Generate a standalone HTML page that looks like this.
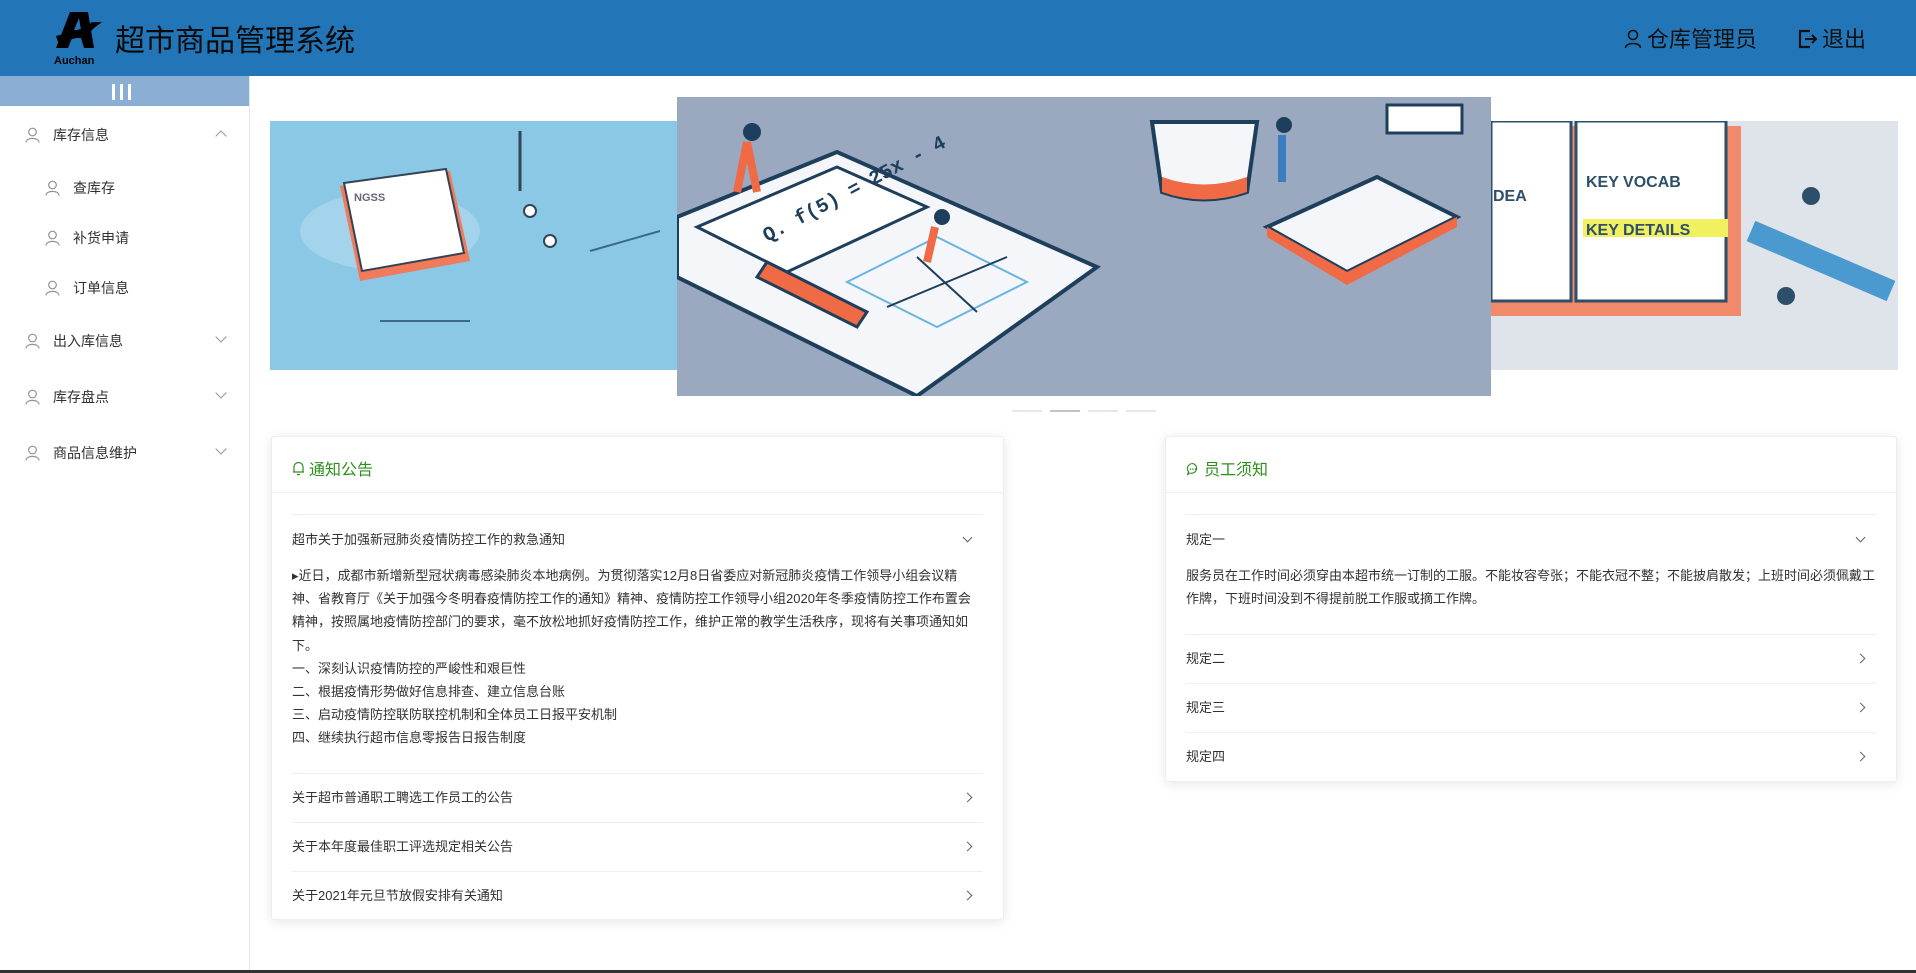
<!DOCTYPE html>
<html><head><meta charset="utf-8"><style>
*{margin:0;padding:0;box-sizing:border-box}
body{width:1916px;height:973px;overflow:hidden;background:#fff;font-family:"Liberation Sans","Noto Sans CJK SC",sans-serif;color:#303133;position:relative}
.hdr{position:absolute;left:0;top:0;width:1916px;height:76px;background:#2276b8}
.title{position:absolute;left:115px;top:16px;font-size:30px;color:#0a0a0a;white-space:nowrap}
.user{position:absolute;left:1624px;top:22px;font-size:22px;color:#111;white-space:nowrap}
.logout{position:absolute;left:1798px;top:22px;font-size:22px;color:#111;white-space:nowrap}
.side{position:absolute;left:0;top:76px;width:250px;height:894px;border-right:1px solid #e6e6e6;background:#fff}
.tog{height:30px;background:#8aaed4;position:relative}
.tog i{position:absolute;top:8px;width:3px;height:16px;background:#fff}
.mi{position:absolute;font-size:14px;color:#303133;white-space:nowrap}
.ic{position:absolute;width:15px;height:16px}
.arr{position:absolute;left:217px;width:8px;height:8px;border-right:1px solid #909399;border-bottom:1px solid #909399}
.card{position:absolute;background:#fff;border:1px solid #ebeef5;box-shadow:0 2px 12px rgba(0,0,0,.1);border-radius:3px}
.ch{height:56px;border-bottom:1px solid #ebeef5;font-size:16px;color:#2e8f1c;padding:19px 0 0 20px;white-space:nowrap}
.row{position:absolute;left:20px;right:20px;font-size:13px;color:#303133;border-top:1px solid #ebeef5;white-space:nowrap}
.para{position:absolute;left:20px;right:20px;font-size:13px;line-height:23.2px;color:#303133}
.chev{position:absolute;right:12px;width:7px;height:7px;border-right:1px solid #606266;border-bottom:1px solid #606266}
.bottom{position:absolute;left:0;top:970px;width:1916px;height:3px;background:#333}
</style></head><body>
<div class="hdr">
<svg style="position:absolute;left:54px;top:10px" width="52" height="56" viewBox="0 0 52 56"><path d="M2 38 L16 2 L34 2 L40 38 L30 38 L27 28 L18 28 L14 38 Z" fill="#000"/><path d="M20 20 L25 8 L27 20 Z" fill="#2276b8"/><path d="M2 26 L30 18 L38 12 L48 12 L40 18 L32 26 L4 32Z" fill="#000"/><text x="0" y="54" font-size="11" font-weight="bold" font-family="Liberation Sans" fill="#000">Auchan</text></svg>
<div class="title">超市商品管理系统</div>
<div class="user"><svg width="18" height="20" viewBox="0 0 18 20" style="vertical-align:-2px;margin-right:5px"><circle cx="9" cy="6" r="4.5" fill="none" stroke="#111" stroke-width="1.6"/><path d="M1.5 19 C1.5 13 16.5 13 16.5 19" fill="none" stroke="#111" stroke-width="1.6"/></svg>仓库管理员</div>
<div class="logout"><svg width="20" height="20" viewBox="0 0 20 20" style="vertical-align:-2px;margin-right:4px"><path d="M12 2 H2 V18 H12" fill="none" stroke="#111" stroke-width="2.2"/><path d="M7 10 H18 M14 6 L18 10 L14 14" fill="none" stroke="#111" stroke-width="2"/></svg>退出</div>
</div>
<div class="side">
<div class="tog"><i style="left:112px"></i><i style="left:120px"></i><i style="left:128px"></i></div>
</div>
<svg class="ic" style="left:25px;top:127px" viewBox="0 0 15 16"><circle cx="7.5" cy="5" r="3.8" fill="none" stroke="#909399" stroke-width="1.2"/><path d="M1 15.5 C1 10 14 10 14 15.5" fill="none" stroke="#909399" stroke-width="1.2"/></svg>
<div class="mi" style="left:53px;top:125px">库存信息</div><div class="arr" style="top:132px;transform:rotate(-135deg)"></div>
<svg class="ic" style="left:45px;top:180px" viewBox="0 0 15 16"><circle cx="7.5" cy="5" r="3.8" fill="none" stroke="#909399" stroke-width="1.2"/><path d="M1 15.5 C1 10 14 10 14 15.5" fill="none" stroke="#909399" stroke-width="1.2"/></svg>
<div class="mi" style="left:73px;top:178px">查库存</div>
<svg class="ic" style="left:45px;top:230px" viewBox="0 0 15 16"><circle cx="7.5" cy="5" r="3.8" fill="none" stroke="#909399" stroke-width="1.2"/><path d="M1 15.5 C1 10 14 10 14 15.5" fill="none" stroke="#909399" stroke-width="1.2"/></svg>
<div class="mi" style="left:73px;top:228px">补货申请</div>
<svg class="ic" style="left:45px;top:280px" viewBox="0 0 15 16"><circle cx="7.5" cy="5" r="3.8" fill="none" stroke="#909399" stroke-width="1.2"/><path d="M1 15.5 C1 10 14 10 14 15.5" fill="none" stroke="#909399" stroke-width="1.2"/></svg>
<div class="mi" style="left:73px;top:278px">订单信息</div>
<svg class="ic" style="left:25px;top:333px" viewBox="0 0 15 16"><circle cx="7.5" cy="5" r="3.8" fill="none" stroke="#909399" stroke-width="1.2"/><path d="M1 15.5 C1 10 14 10 14 15.5" fill="none" stroke="#909399" stroke-width="1.2"/></svg>
<div class="mi" style="left:53px;top:331px">出入库信息</div><div class="arr" style="top:333px;transform:rotate(45deg)"></div>
<svg class="ic" style="left:25px;top:389px" viewBox="0 0 15 16"><circle cx="7.5" cy="5" r="3.8" fill="none" stroke="#909399" stroke-width="1.2"/><path d="M1 15.5 C1 10 14 10 14 15.5" fill="none" stroke="#909399" stroke-width="1.2"/></svg>
<div class="mi" style="left:53px;top:387px">库存盘点</div><div class="arr" style="top:389px;transform:rotate(45deg)"></div>
<svg class="ic" style="left:25px;top:445px" viewBox="0 0 15 16"><circle cx="7.5" cy="5" r="3.8" fill="none" stroke="#909399" stroke-width="1.2"/><path d="M1 15.5 C1 10 14 10 14 15.5" fill="none" stroke="#909399" stroke-width="1.2"/></svg>
<div class="mi" style="left:53px;top:443px">商品信息维护</div><div class="arr" style="top:445px;transform:rotate(45deg)"></div>

<svg style="position:absolute;left:270px;top:121px" width="408" height="249" viewBox="0 0 408 249">
<rect width="408" height="249" fill="#8ac8e6"/>
<ellipse cx="120" cy="110" rx="90" ry="40" fill="#a3d4ec"/>
<path d="M70 65 L180 50 L200 140 L90 160 Z" fill="#f07a5a"/><path d="M74 62 L176 48 L194 132 L92 150 Z" fill="#fff" stroke="#345" stroke-width="2"/>
<text x="84" y="80" font-size="11" font-weight="bold" fill="#667" font-family="Liberation Sans">NGSS</text>
<path d="M110 200 H200 M320 130 L390 110" stroke="#3a6a8a" stroke-width="2"/>
<circle cx="260" cy="90" r="6" fill="#fff" stroke="#345" stroke-width="2"/><circle cx="280" cy="120" r="6" fill="#fff" stroke="#345" stroke-width="2"/>
<path d="M250 10 V70" stroke="#345" stroke-width="3"/>
</svg>
<svg style="position:absolute;left:1491px;top:121px" width="407" height="249" viewBox="0 0 407 249">
<rect width="407" height="249" fill="#dfe4eb"/>
<rect x="0" y="5" width="250" height="190" fill="#f08a6a"/>
<rect x="0" y="0" width="80" height="180" fill="#fff" stroke="#2e4f6a" stroke-width="3"/>
<rect x="85" y="0" width="150" height="180" fill="#fff" stroke="#2e4f6a" stroke-width="3"/>
<text x="95" y="66" font-size="16" font-weight="bold" fill="#2e4f6a" font-family="Liberation Sans">KEY VOCAB</text>
<rect x="92" y="98" width="145" height="18" fill="#f0f060"/>
<text x="95" y="114" font-size="16" font-weight="bold" fill="#2e4f6a" font-family="Liberation Sans">KEY DETAILS</text>
<text x="2" y="80" font-size="16" font-weight="bold" fill="#2e4f6a" font-family="Liberation Sans">DEA</text>
<path d="M260 110 L400 170" stroke="#4a9ad0" stroke-width="22"/>
<circle cx="320" cy="75" r="9" fill="#2e4f6a"/><circle cx="295" cy="175" r="9" fill="#2e4f6a"/>
</svg>
<svg style="position:absolute;left:677px;top:97px" width="814" height="299" viewBox="0 0 814 299">
<rect width="814" height="299" fill="#9aa9c0"/>
<path d="M0 120 L160 55 L420 170 L240 299 L0 180 Z" fill="#f4f6fa" stroke="#1e3f5c" stroke-width="4"/>
<path d="M20 130 L160 70 L250 110 L110 175 Z" fill="#fff" stroke="#1e3f5c" stroke-width="3"/>
<text x="90" y="145" font-size="20" font-weight="bold" fill="#1e3f5c" font-family="Liberation Mono" transform="rotate(-28 90 145)">Q. f(5) = 25x - 4</text>
<path d="M170 185 L260 140 L350 185 L260 230 Z" fill="none" stroke="#6ab4e0" stroke-width="2"/>
<path d="M210 210 L330 160 M240 160 L300 215" stroke="#1e3f5c" stroke-width="2"/>
<path d="M475 25 H580 L570 95 Q527 110 485 95 Z" fill="#f4f6fa" stroke="#1e3f5c" stroke-width="4"/>
<path d="M485 80 Q527 95 570 80 L570 95 Q527 110 485 95 Z" fill="#ef6a45"/>
<path d="M590 130 L700 80 L780 120 L670 175 Z" fill="#f4f6fa" stroke="#1e3f5c" stroke-width="4"/>
<path d="M590 130 L670 175 L780 120 L780 130 L670 188 L590 140 Z" fill="#ef6a45"/>
<rect x="710" y="8" width="75" height="28" fill="#fff" stroke="#1e3f5c" stroke-width="3"/>
<path d="M90 165 L190 215 L180 230 L80 180 Z" fill="#ef6a45" stroke="#1e3f5c" stroke-width="3"/>
<circle cx="75" cy="35" r="9" fill="#1e3f5c"/><path d="M70 45 L60 95 M70 45 L80 95" stroke="#ef6a45" stroke-width="8"/>
<circle cx="265" cy="120" r="8" fill="#1e3f5c"/><path d="M258 130 L250 165" stroke="#ef6a45" stroke-width="8"/>
<circle cx="607" cy="28" r="8" fill="#1e3f5c"/><path d="M605 38 V85" stroke="#3a7ec0" stroke-width="8"/>
</svg>
<div style="position:absolute;top:410px;left:1012px;width:30px;height:2px;background:#e4e7ed"></div>
<div style="position:absolute;top:410px;left:1050px;width:30px;height:2px;background:#c0c4cc"></div>
<div style="position:absolute;top:410px;left:1088px;width:30px;height:2px;background:#e4e7ed"></div>
<div style="position:absolute;top:410px;left:1126px;width:30px;height:2px;background:#e4e7ed"></div>

<div class="card" style="left:271px;top:436px;width:733px;height:484px">
<div class="ch"><svg width="13" height="15" viewBox="0 0 13 15" style="vertical-align:-1px;margin-right:4px"><path d="M2 11 V6 A4.5 4.5 0 0 1 11 6 V11 H12 M1 11 H12 M5 13.5 H8" fill="none" stroke="#2e8f1c" stroke-width="1.2"/></svg>通知公告</div>
<div class="row" style="top:77px;height:1px"></div>
<div class="para" style="top:93px;line-height:20px">超市关于加强新冠肺炎疫情防控工作的救急通知<div class="chev" style="top:4px;right:12px;transform:rotate(45deg)"></div></div>
<div class="para" style="top:127px">▸近日，成都市新增新型冠状病毒感染肺炎本地病例。为贯彻落实12月8日省委应对新冠肺炎疫情工作领导小组会议精神、省教育厅《关于加强今冬明春疫情防控工作的通知》精神、疫情防控工作领导小组2020年冬季疫情防控工作布置会精神，按照属地疫情防控部门的要求，毫不放松地抓好疫情防控工作，维护正常的教学生活秩序，现将有关事项通知如下。<br>一、深刻认识疫情防控的严峻性和艰巨性<br>二、根据疫情形势做好信息排查、建立信息台账<br>三、启动疫情防控联防联控机制和全体员工日报平安机制<br>四、继续执行超市信息零报告日报告制度</div>
<div class="row" style="top:336px;height:49px;line-height:48px">关于超市普通职工聘选工作员工的公告<div class="chev" style="top:20px;transform:rotate(-45deg)"></div></div>
<div class="row" style="top:385px;height:49px;line-height:48px">关于本年度最佳职工评选规定相关公告<div class="chev" style="top:20px;transform:rotate(-45deg)"></div></div>
<div class="row" style="top:434px;height:49px;line-height:48px;border-bottom:1px solid #ebeef5">关于2021年元旦节放假安排有关通知<div class="chev" style="top:20px;transform:rotate(-45deg)"></div></div>
</div>

<div class="card" style="left:1165px;top:436px;width:732px;height:346px">
<div class="ch"><svg width="14" height="14" viewBox="0 0 14 14" style="vertical-align:-1px;margin-right:4px"><path d="M7 1.5 A5.5 5 0 1 1 3 11 L1.5 13 L2.5 9.5 A5.5 5 0 0 1 7 1.5Z" fill="none" stroke="#2e8f1c" stroke-width="1.1"/><circle cx="4.5" cy="7" r=".8" fill="#2e8f1c"/><circle cx="7" cy="7" r=".8" fill="#2e8f1c"/><circle cx="9.5" cy="7" r=".8" fill="#2e8f1c"/></svg>员工须知</div>
<div class="row" style="top:77px;height:1px"></div>
<div class="para" style="top:93px;line-height:20px">规定一<div class="chev" style="top:4px;transform:rotate(45deg)"></div></div>
<div class="para" style="top:127px">服务员在工作时间必须穿由本超市统一订制的工服。不能妆容夸张；不能衣冠不整；不能披肩散发；上班时间必须佩戴工作牌，下班时间没到不得提前脱工作服或摘工作牌。</div>
<div class="row" style="top:197px;height:49px;line-height:48px">规定二<div class="chev" style="top:20px;transform:rotate(-45deg)"></div></div>
<div class="row" style="top:246px;height:49px;line-height:48px">规定三<div class="chev" style="top:20px;transform:rotate(-45deg)"></div></div>
<div class="row" style="top:295px;height:49px;line-height:48px">规定四<div class="chev" style="top:20px;transform:rotate(-45deg)"></div></div>
</div>
<div class="bottom"></div>
</body></html>
